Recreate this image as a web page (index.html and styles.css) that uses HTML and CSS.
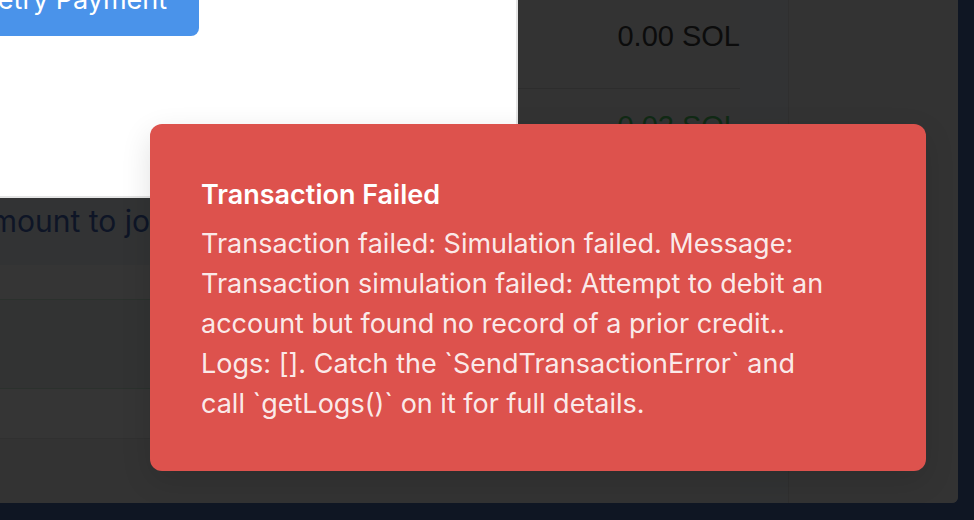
FILE: index.html
```html
<!DOCTYPE html>
<html lang="en">
<head>
<meta charset="utf-8">
<title>Transaction Failed</title>
<link rel="stylesheet" href="styles.css">
</head>
<body>
<div class="screen">
  <div class="main">
    <div class="row r1"><span class="amt">0.00 SOL</span></div>
    <div class="row r2"><span class="amt green">0.02 SOL</span></div>
    <div class="label">Amount to join</div>
    <div class="band b1"></div>
    <div class="band b2"></div>
    <div class="band b3"></div>
    <div class="band b4"></div>
  </div>
  <div class="side"></div>

  <div class="modal">
    <button class="btn">Retry Payment</button>
  </div>

  <div class="toast">
    <div class="toast-title">Transaction Failed</div>
    <div class="toast-body">Transaction failed: Simulation failed. Message: Transaction simulation failed: Attempt to debit an account but found no record of a prior credit.. Logs: []. Catch the `SendTransactionError` and call `getLogs()` on it for full details.</div>
  </div>
</div>
</body>
</html>
```

FILE: styles.css
```css
* { box-sizing: border-box; }

html, body {
  margin: 0;
  padding: 0;
}

body {
  width: 974px;
  height: 520px;
  overflow: hidden;
  background: #0f1623;
  font-family: Inter, "Noto Sans", sans-serif;
}

.screen {
  position: relative;
  width: 958px;
  height: 503px;
  background: #333333;
  border-bottom-right-radius: 6px;
  overflow: hidden;
  display: grid;
  grid-template-columns: 788px 1fr;
}

.main {
  padding-right: 48px;
  display: flex;
  flex-direction: column;
  background: #323334;
}

.row {
  display: flex;
  justify-content: flex-end;
  align-items: flex-start;
}

.r1 {
  height: 89px;
  padding-top: 22px;
  border-bottom: 1px solid #2d2d2d;
  background: #333333;
}

.r2 {
  height: 109px;
  padding-top: 23px;
  background: #333333;
}

.amt {
  font-family: "Liberation Sans", Arial, sans-serif;
  font-size: 29px;
  line-height: 29px;
  color: #0c0c0c;
}

.amt.green {
  color: #112a15;
}

.label {
  height: 67px;
  padding-top: 5px;
  margin-left: -30px;
  font-size: 30px;
  line-height: 36px;
  color: #0e1526;
  white-space: nowrap;
}

.band { flex: none; }

.b1 {
  height: 35px;
  background: #353535;
  border-bottom: 1px solid #2b312d;
}

.b2 {
  height: 89px;
  background: #323333;
  border-bottom: 1px solid #2b312d;
}

.b3 {
  height: 50px;
  background: #353535;
  border-bottom: 1px solid #303030;
}

.b4 {
  flex: 1;
  background: #333333;
}

.side {
  border-left: 1px solid #2f2f2f;
  background: #333333;
}

.modal {
  position: absolute;
  left: -60px;
  top: -40px;
  width: 578px;
  height: 238px;
  background: #ffffff;
  border-right: 2px solid #e4e4e4;
  border-bottom: 2px solid #e4e4e4;
  padding: 6px 0 0 9px;
  display: flex;
  align-items: flex-start;
}

.btn {
  width: 250px;
  height: 70px;
  padding: 16px 0 18px;
  border: none;
  border-radius: 8px;
  background: #4a93ea;
  color: #ffffff;
  font-family: Inter, "Noto Sans", sans-serif;
  font-size: 27px;
  line-height: 36px;
  text-align: center;
}

.toast {
  position: absolute;
  left: 150px;
  top: 124px;
  width: 776px;
  height: 347px;
  padding: 55px 86px 0 51px;
  border-radius: 12px;
  background: #dd524d;
  box-shadow: 0 10px 30px rgba(0, 0, 0, 0.12);
}

.toast-title {
  font-size: 27px;
  line-height: 32px;
  font-weight: 600;
  color: #ffffff;
  margin-bottom: 13px;
}

.toast-body {
  font-size: 27px;
  line-height: 40px;
  color: rgba(255, 255, 255, 0.9);
}
```
